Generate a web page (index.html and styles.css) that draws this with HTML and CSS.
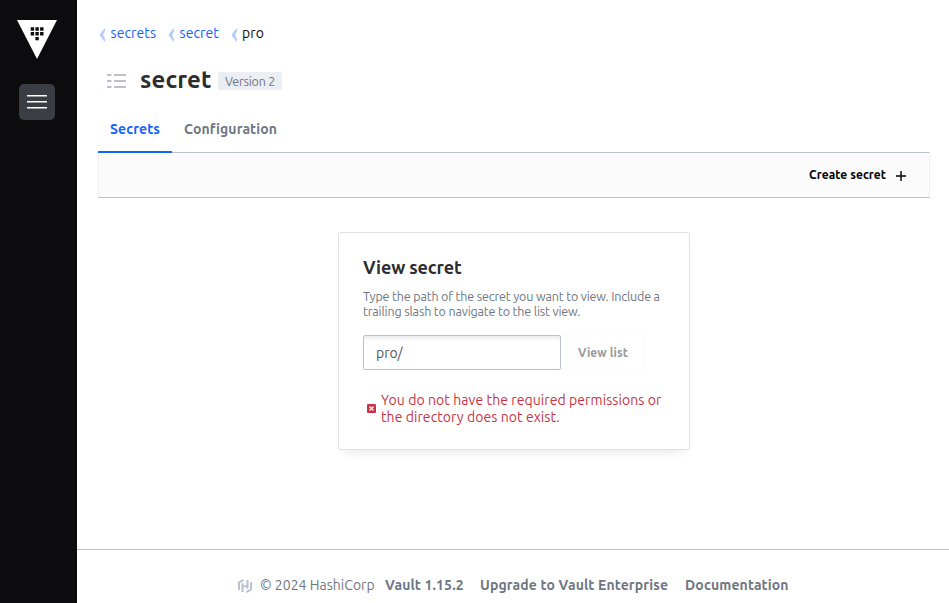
FILE: index.html
```html
<!DOCTYPE html>
<html lang="en">
<head>
<meta charset="utf-8">
<title>Vault</title>
<link rel="stylesheet" href="styles.css">
</head>
<body>
<aside class="sidebar">
  <svg class="logo" width="40" height="39" viewBox="0 0 40 39"><path fill="#fff" d="M0 0h40L20 39z"/><path fill="#0c0c0e" d="M13.7 7.3h3.4v3.4h-3.4zm4.7 0h3.4v3.4h-3.4zm4.7 0h3.4v3.4h-3.4zM13.7 12h3.4v3.4h-3.4zm4.7 0h3.4v3.4h-3.4zm4.7 0h3.4v3.4h-3.4zM18.4 16.9h3.4v3.4h-3.4z"/></svg>
  <button class="menu" aria-label="Menu"><svg width="20" height="14" viewBox="0 0 20 14"><path fill="#fff" d="M0 0h20v1.4H0zM0 6h20v1.4H0zM0 12h20v1.4H0z"/></svg></button>
</aside>
<div class="page">
  <main class="main">
    <nav class="crumbs">
      <svg class="chev" width="5" height="14" viewBox="0 0 5 14"><path d="M5 0v3L3 7l2 4v3L0 8V6z"/></svg><a class="c1">secrets</a>
      <svg class="chev" width="5" height="14" viewBox="0 0 5 14"><path d="M5 0v3L3 7l2 4v3L0 8V6z"/></svg><a class="c2">secret</a>
      <svg class="chev" width="5" height="14" viewBox="0 0 5 14"><path d="M5 0v3L3 7l2 4v3L0 8V6z"/></svg><span class="current">pro</span>
    </nav>
    <header class="title">
      <svg width="19" height="14" viewBox="0 0 19 14"><path fill="#bac1cc" d="M0 0h4.500v2H0zm7 0h12v2H7zM0 6h4.500v2H0zm7 0h12v2H7zM0 12h4.500v2H0zm7 0h12v2H7z"/></svg>
      <h1>secret</h1><span class="badge">Version 2</span>
    </header>
    <nav class="tabs"><a class="tab active">Secrets</a><a class="tab config">Configuration</a></nav>
    <div class="toolbar"><a class="create">Create secret</a><svg width="10" height="10" viewBox="0 0 10 10"><path stroke="#000" stroke-width="1.4" d="M5 0v10M0 5h10"/></svg></div>
    <section class="card">
      <h2>View secret</h2>
      <p class="desc">Type the path of the secret you want to view. Include a<br>trailing slash to navigate to the list view.</p>
      <div class="form"><div class="input">pro/</div><button class="view">View list</button></div>
      <div class="error">
        <svg width="9" height="9" viewBox="0 0 9 9"><rect width="9" height="9" rx="1" fill="#c73445"/><path stroke="#fff" stroke-width="1.2" d="M2.500 2.500l4 4M6.500 2.500l-4 4"/></svg>
        <p>You do not have the required permissions or<br>the directory does not exist.</p>
      </div>
    </section>
  </main>
  <footer class="footer">
    <svg width="14" height="14" viewBox="0 0 14 14"><path fill="none" stroke="#bac1cc" stroke-width="2" d="M5.500.9L1 3.500v7.400M4.500 13V4.300M4.500 7.200h5M9.500 1v8.700M8.500 13.100L13 10.500V3.100"/></svg>
    <span class="copy">© 2024 HashiCorp</span><b class="ver">Vault 1.15.2</b><b class="up">Upgrade to Vault Enterprise</b><b class="docs">Documentation</b>
  </footer>
</div>
</body>
</html>
```
FILE: styles.css
```css
* { box-sizing: border-box; }
body {
  margin: 0;
  height: 603px;
  display: flex;
  overflow: hidden;
  background: #fff;
  color: #2d2d2f;
  font-family: Ubuntu, "Noto Sans", sans-serif;
  font-size: 14px;
  white-space: nowrap;
}
svg { display: block; flex: none; }
h1, h2, p { margin: 0; }
button { padding: 0; border: 0; font: inherit; }
.sidebar { width: 77px; flex: none; background: #0c0c0e; padding: 20px 0 0 17px; }
.menu {
  width: 36px; height: 36px; margin: 25px 0 0 2px;
  display: flex; align-items: center; justify-content: center;
  background: #3b3d45; border-radius: 5px;
}
.page { flex: 1; display: flex; flex-direction: column; }
.main { flex: 1; padding: 0 19px 0 21px; }
.crumbs { display: flex; align-items: center; height: 34px; margin: 16px 0 0 2px; color: #1563ff; letter-spacing: .1px; }
.crumbs a, .current { flex: none; }
.chev { fill: #b4cbff; margin: 4px 5.5px 0 0; }
.c1 { width: 58.5px; }
.c2 { width: 52px; }
.current { color: #0c0c0e; }
.title { display: flex; align-items: center; height: 40px; margin: 11px 0 0 9px; }
h1 { width: 78px; margin: -2px 0 0 14px; font-size: 24px; line-height: 38px; letter-spacing: .12px; }
.badge { width: 64px; height: 18px; padding-left: 7px; border-radius: 2px; background: #ebeef2; color: #6f7682; font-size: 12.5px; line-height: 18px; letter-spacing: -.2px; }
.tabs { display: flex; height: 51px; margin-top: 1px; }
.tab { height: 51px; padding-left: 12px; line-height: 54px; font-weight: 700; color: #6f7682; letter-spacing: .12px; }
.active { width: 74px; color: #1563ff; border-bottom: 2px solid #1563ff; position: relative; }
.toolbar {
  height: 46px; margin-top: -1px; padding-right: 23px;
  display: flex; align-items: center; justify-content: flex-end;
  background: #fbfbfb; border: 1px solid #ebeef2; border-top-color: #bac1cc; border-bottom-color: #bac1cc;
}
.create { width: 87px; margin-top: -2px; color: #000; font-size: 12px; font-weight: 700; letter-spacing: .07px; }
.toolbar svg { margin-top: 1px; }
.card {
  width: 352px; height: 218px; margin: 34px auto 0; padding: 22px 24px;
  border: 1px solid #e0e1e3; border-radius: 2px;
  box-shadow: 0 8px 12px -7px rgba(0,0,0,.12);
}
h2 { font-size: 18px; line-height: 24px; letter-spacing: -.13px; font-weight: 700; }
.desc { margin-top: 10px; font-size: 12.5px; line-height: 15px; color: #6f7682; letter-spacing: -.155px; }
.form { display: flex; margin-top: 16px; }
.input { width: 198px; height: 35px; border: 1px solid #bac1cc; border-radius: 2px; padding-left: 12px; line-height: 35px; color: #525761; box-shadow: inset 0 4px 3px -1px #eeeff1; }
.view { width: 84px; height: 35px; padding-left: 16px; text-align: left; background: #fff; border: 1px solid #fbfbfb; color: #97989b; font-size: 12px; font-weight: 700; letter-spacing: .1px; }
.error { display: flex; align-items: center; margin: 22px 0 0 4px; color: #c73445; line-height: 17px; }
.error svg { margin-top: -1px; }
.error p { margin-left: 5px; letter-spacing: .08px; }
.footer { height: 54px; border-top: 1px solid #bac1cc; padding: 17px 0 0 161px; display: flex; align-items: center; color: #6f7682; letter-spacing: .13px; }
.footer b { font-weight: 700; }
.footer svg { margin-top: 2px; }
.footer span, .footer b { flex: none; }
.copy { width: 125px; margin-left: 8px; letter-spacing: .03px; }
.ver { width: 95px; }
.up { width: 205px; }
```
